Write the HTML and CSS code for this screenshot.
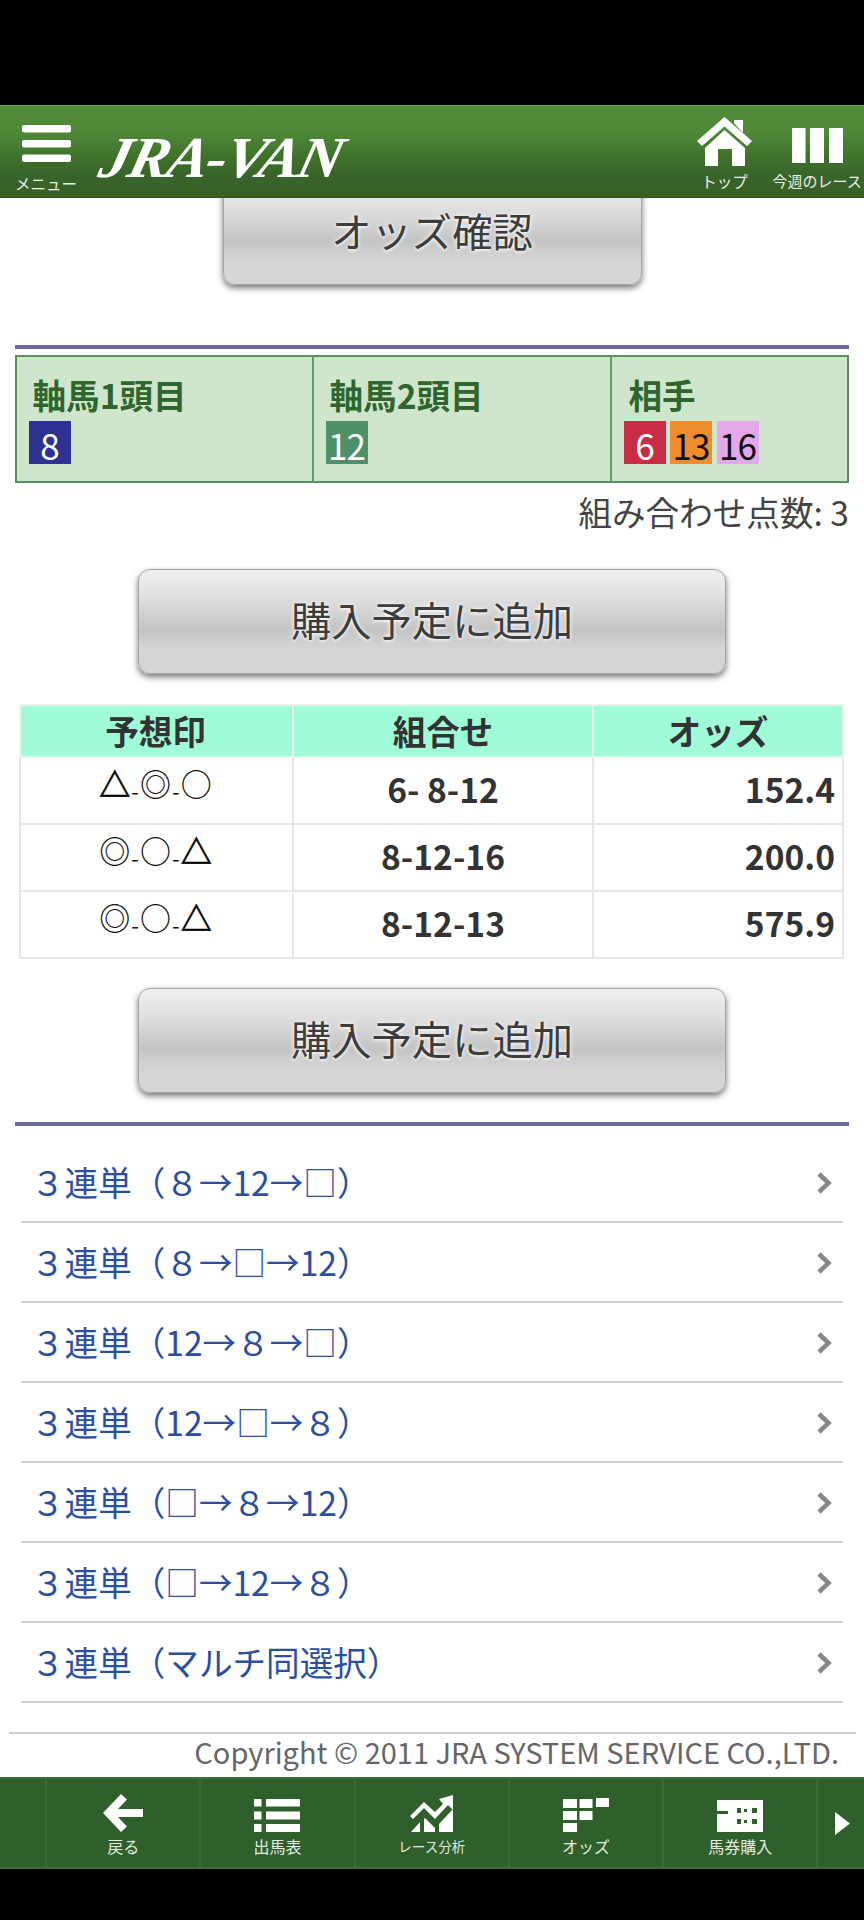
FILE: index.html
```html
<!DOCTYPE html>
<html lang="ja">
<head>
<meta charset="utf-8">
<title>JRA-VAN</title>
<link rel="stylesheet" href="styles.css">
</head>
<body>
<div class="app">
  <header class="header">
    <a class="hd-menu">
      <svg class="ic-menu" width="49" height="37" viewBox="0 0 49 37"><rect width="49" height="7.5" rx="2" fill="#fff"/><rect y="15" width="49" height="7.5" rx="2" fill="#fff"/><rect y="29.5" width="49" height="7.5" rx="2" fill="#fff"/></svg>
      <span class="hd-label">メニュー</span>
    </a>
    <span class="logo">JRA-VAN</span>
    <span class="hd-space"></span>
    <a class="hd-top">
      <svg width="55" height="49" viewBox="0 0 55 49"><path fill="#fff" d="M37 6V3h9v13z"/><path fill="#fff" d="M27.500 0 55 24l-5 5L27.500 9.500 5 29l-5-5z"/><path fill="#fff" d="M27.500 13 48 31v18H35V32H21v17H8V31z"/></svg>
      <span class="hd-label">トップ</span>
    </a>
    <a class="hd-week">
      <svg width="51" height="35" viewBox="0 0 51 35"><rect width="13.500" height="35" fill="#fff"/><rect x="18" width="14" height="35" fill="#fff"/><rect x="37" width="14" height="35" fill="#fff"/></svg>
      <span class="hd-label">今週のレース</span>
    </a>
  </header>

  <main class="main">
    <button class="btn btn-odds">オッズ確認</button>
    <div class="rule rule-a"></div>
    <div class="sel">
      <div class="sel-cell sel-1">
        <div class="sel-title">軸馬1頭目</div>
        <div class="badges"><span class="badge b-navy">8</span></div>
      </div>
      <div class="sel-cell sel-2">
        <div class="sel-title">軸馬2頭目</div>
        <div class="badges"><span class="badge b-green">12</span></div>
      </div>
      <div class="sel-cell sel-3">
        <div class="sel-title">相手</div>
        <div class="badges"><span class="badge b-red">6</span><span class="badge b-orange">13</span><span class="badge b-lilac">16</span></div>
      </div>
    </div>
    <div class="count">組み合わせ点数: 3</div>
    <button class="btn btn-add btn-add-1">購入予定に追加</button>
    <table class="odds">
      <thead>
        <tr><th class="c1">予想印</th><th class="c2">組合せ</th><th class="c3">オッズ</th></tr>
      </thead>
      <tbody>
        <tr><td class="marks"><span class="m m-t">△</span><span class="d">-</span><span class="m">◎</span><span class="d">-</span><span class="m">○</span></td><td class="combo">6- 8-12</td><td class="val">152.4</td></tr>
        <tr><td class="marks"><span class="m">◎</span><span class="d">-</span><span class="m">○</span><span class="d">-</span><span class="m m-t">△</span></td><td class="combo">8-12-16</td><td class="val">200.0</td></tr>
        <tr><td class="marks"><span class="m">◎</span><span class="d">-</span><span class="m">○</span><span class="d">-</span><span class="m m-t">△</span></td><td class="combo">8-12-13</td><td class="val">575.9</td></tr>
      </tbody>
    </table>
    <button class="btn btn-add btn-add-2">購入予定に追加</button>
    <div class="rule rule-b"></div>
    <ul class="links">
      <li><span>３連単（８→12→□）</span><svg class="chev" width="16" height="24" viewBox="0 0 16 24"><path d="M3 3l9.500 9L3 21" fill="none" stroke="#888" stroke-width="4.500"/></svg></li>
      <li><span>３連単（８→□→12）</span><svg class="chev" width="16" height="24" viewBox="0 0 16 24"><path d="M3 3l9.500 9L3 21" fill="none" stroke="#888" stroke-width="4.500"/></svg></li>
      <li><span>３連単（12→８→□）</span><svg class="chev" width="16" height="24" viewBox="0 0 16 24"><path d="M3 3l9.500 9L3 21" fill="none" stroke="#888" stroke-width="4.500"/></svg></li>
      <li><span>３連単（12→□→８）</span><svg class="chev" width="16" height="24" viewBox="0 0 16 24"><path d="M3 3l9.500 9L3 21" fill="none" stroke="#888" stroke-width="4.500"/></svg></li>
      <li><span>３連単（□→８→12）</span><svg class="chev" width="16" height="24" viewBox="0 0 16 24"><path d="M3 3l9.500 9L3 21" fill="none" stroke="#888" stroke-width="4.500"/></svg></li>
      <li><span>３連単（□→12→８）</span><svg class="chev" width="16" height="24" viewBox="0 0 16 24"><path d="M3 3l9.500 9L3 21" fill="none" stroke="#888" stroke-width="4.500"/></svg></li>
      <li><span>３連単（マルチ同選択）</span><svg class="chev" width="16" height="24" viewBox="0 0 16 24"><path d="M3 3l9.500 9L3 21" fill="none" stroke="#888" stroke-width="4.500"/></svg></li>
    </ul>
    <div class="copy">Copyright © 2011 JRA SYSTEM SERVICE CO.,LTD.</div>
  </main>

  <footer class="footer">
    <span class="ft-pad"></span>
    <a class="ft-item">
      <svg width="40" height="38" viewBox="0 0 40 38"><path fill="#fff" d="M18 0l6 5.500-9 9.500h25v8H15l9 9.500-6 5.500L0 19z"/></svg>
      <span>戻る</span>
    </a>
    <a class="ft-item">
      <svg width="46" height="33" viewBox="0 0 46 33"><g fill="#fff"><rect width="7.500" height="7.500"/><rect x="12" width="34" height="7.500"/><rect y="12.500" width="7.500" height="8"/><rect x="12" y="12.500" width="34" height="8"/><rect y="25" width="7.500" height="8"/><rect x="12" y="25" width="34" height="8"/></g></svg>
      <span>出馬表</span>
    </a>
    <a class="ft-item">
      <svg width="43" height="37" viewBox="0 0 43 37"><g fill="#fff"><path d="M0 21 14 7l11 10L33 9l-4-5 14-4v15l-5-5-13 14-11-11L3 24z"/><path d="M1 37l9-10v10z"/><path d="M14 37V24l1-1 10 10v4z"/><path d="M29 37V29l14-15v23z"/></g></svg>
      <span class="ft-small">レース分析</span>
    </a>
    <a class="ft-item">
      <svg width="46" height="34" viewBox="0 0 46 34"><g fill="#fff"><rect y="1" width="14" height="9"/><rect x="16.500" y="1" width="13" height="9"/><rect x="33" width="13" height="9"/><rect y="13" width="14" height="9"/><rect x="16.500" y="13" width="13" height="9"/><rect y="25" width="14" height="9"/></g></svg>
      <span>オッズ</span>
    </a>
    <a class="ft-item">
      <svg width="46" height="32" viewBox="0 0 46 32"><path fill="#fff" d="M0 0h46v32H0V14h11v-3H0z"/><g fill="#2f5f2b"><rect x="20" y="8" width="4" height="5"/><rect x="27" y="9" width="3" height="3"/><rect x="35" y="8" width="5" height="5"/><rect x="20" y="19" width="4" height="5"/><rect x="27" y="20" width="3" height="3"/><rect x="35" y="19" width="5" height="5"/></g></svg>
      <span>馬券購入</span>
    </a>
    <a class="ft-next">
      <svg width="15" height="23" viewBox="0 0 15 23"><path fill="#fff" d="M0 0l15 11.500L0 23z"/></svg>
    </a>
  </footer>
</div>
</body>
</html>
```

FILE: styles.css
```css
* { box-sizing: border-box; }
html, body { margin: 0; padding: 0; }
body {
  background: #000;
  font-family: "Noto Sans CJK JP", "Noto Sans", sans-serif;
}
.app {
  width: 864px;
  height: 1920px;
  padding-top: 105px;
  padding-bottom: 51px;
  display: flex;
  flex-direction: column;
}
.header {
  height: 93px;
  flex: none;
  display: flex;
  position: relative;
  z-index: 2;
  color: #fff;
  background: linear-gradient(#528f38 0, #4d8836 30%, #3f7029 58%, #38632a 80%, #376026 100%);
  border-top: 1px solid #6ca852;
  border-bottom: 1px solid #2e5520;
}
.hd-menu, .hd-top, .hd-week {
  display: flex;
  flex-direction: column;
  align-items: center;
  text-decoration: none;
}
.hd-menu { margin-left: 16px; width: 60px; padding-top: 19px; }
.hd-top { width: 55px; padding-top: 11px; }
.hd-week { width: 88px; margin: 0 3px 0 21px; padding-top: 22px; }
.hd-label {
  font-size: 15px;
  line-height: 18px;
  white-space: nowrap;
  color: #e8efe4;
}
.hd-menu .hd-label { margin-top: 12px; font-size: 15.500px; }
.hd-top .hd-label { margin-top: 6px; font-size: 15.500px; }
.hd-week .hd-label { margin-top: 9px; }
.logo {
  margin: 22px 0 0 24px;
  width: 247px;
  font-family: "Liberation Serif", serif;
  font-weight: 700;
  font-style: italic;
  font-size: 58px;
  line-height: 60px;
  letter-spacing: -2px;
  white-space: nowrap;
  color: #fff;
  transform: skewX(-14deg) scaleX(1.06);
  transform-origin: 0 50%;
}
.hd-space { flex: 1; }

.main {
  flex: 1;
  overflow: hidden;
  background: #fff;
  display: flex;
  flex-direction: column;
  color: #444;
}
.btn {
  flex: none;
  display: block;
  height: 105px;
  align-self: center;
  padding: 0 0 4px;
  font: 400 40.3px/1 "Noto Sans CJK JP", sans-serif;
  color: #3c3c3c;
  text-shadow: 0 0 5px rgba(255,255,255,.9), 0 1px 3px rgba(255,255,255,.8);
  border: 1px solid #a5a5a5;
  border-radius: 12px;
  background: linear-gradient(#f0f0f0 0, #dedede 28%, #c4c4c4 58%, #d4d4d4 76%, #d6d6d6 100%);
  box-shadow: 0 3px 6px rgba(0,0,0,.55);
}
.btn-odds { width: 419px; margin-top: -18px; }
.btn-add { width: 588px; }
.btn-add-1 { margin-top: 41px; }
.btn-add-2 { margin-top: 29px; }
.rule {
  flex: none;
  height: 4px;
  margin: 0 15px;
  background: #6d6b9b;
}
.rule-a { margin-top: 60px; }
.rule-b { margin-top: 29px; }

.sel {
  flex: none;
  height: 128px;
  margin: 6px 15px 0 14.500px;
  display: flex;
  background: #cfe5cc;
  border: 2px solid #5d8d5b;
}
.sel-cell { padding: 11px 0 0 12px; }
.sel-1 { width: 295px; }
.sel-2 { width: 298px; border-left: 2px solid #6c9a69; }
.sel-3 { flex: 1; border-left: 2px solid #6c9a69; }
.sel-title {
  padding-left: 4px;
  font-size: 33.6px;
  line-height: 53px;
  font-weight: 700;
  color: #2f662d;
}
.sel-3 .sel-title { padding-left: 5px; }
.badges { display: flex; gap: 4.500px; }
.badge {
  width: 42px;
  height: 43px;
  font-size: 35px;
  line-height: 47px;
  font-weight: 400;
  text-align: center;
  letter-spacing: -1px;
}
.b-navy { background: #2e3192; color: #fff; }
.b-green { background: #4f9068; color: #fff; }
.b-red { background: #c92d45; color: #fff; }
.b-orange { background: #ef8c2e; color: #111; }
.b-lilac { background: #e3a8ea; color: #111; }

.count {
  flex: none;
  height: 45px;
  margin: 0 15px 0 0;
  text-align: right;
  font-size: 33.6px;
  line-height: 58px;
  color: #444;
}

.odds {
  flex: none;
  width: 825px;
  height: 253px;
  margin: 30px 20px 0 19px;
  border-collapse: collapse;
  table-layout: fixed;
  color: #333;
  font-size: 33.6px;
}
.odds th, .odds td { border: 2px solid #e6e6e6; padding: 0; font-weight: 700; }
.odds th { height: 52px; background: #a0fcd8; line-height: 40px; border-color: #e6f5ee; }
.odds td { height: 67px; padding-bottom: 4px; }
.c1 { width: 273px; padding-right: 2px !important; }
.c2 { width: 300px; }
.marks { text-align: center; vertical-align: top; padding: 2px 2px 0 0 !important; line-height: 44px; font-weight: 400 !important; color: #111; }
.m { font-size: 31px; font-weight: 500; }
.m-t { font-weight: 700; color: #000; -webkit-text-stroke: 0.6px #000; }
.d { font-size: 22px; display: inline-block; vertical-align: -4px; line-height: 1; margin: 0 1px; }
.combo { text-align: center; white-space: pre; }
.val { text-align: right; padding-right: 7px !important; }

.links {
  flex: none;
  list-style: none;
  margin: 17px 21px 0;
  padding: 0;
  color: #2a4ea0;
  font-size: 33.6px;
}
.links li {
  height: 80px;
  display: flex;
  align-items: center;
  justify-content: space-between;
  padding: 0 11px 1px 10px;
  border-bottom: 2px solid #cfcfcf;
  white-space: nowrap;
}
.chev { flex: none; margin-top: 2px; }

.copy {
  flex: none;
  margin: 29px 8px 0 9px;
  height: 45px;
  border-top: 2px solid #cfcfcf;
  text-align: right;
  padding-right: 17px;
  font-size: 29px;
  line-height: 34px;
  color: #666;
  white-space: nowrap;
}

.footer {
  height: 92px;
  flex: none;
  display: flex;
  background: #2f5f2b;
  border-top: 2px solid #3d6f39;
  border-bottom: 2px solid #47694a;
}
.ft-pad { width: 45px; }
.ft-item {
  width: 154.300px;
  border-left: 2px solid #3a6b36;
  display: flex;
  flex-direction: column;
  align-items: center;
  justify-content: flex-end;
  padding-bottom: 10px;
  color: #e4ece2;
  font-size: 16px;
  line-height: 22px;
  white-space: nowrap;
}
.ft-item svg { margin-bottom: 3px; }
.ft-small { font-size: 13.500px; }
.ft-next {
  flex: 1;
  border-left: 2px solid #3a6b36;
  display: flex;
  align-items: center;
  padding-left: 17px;
}
```
